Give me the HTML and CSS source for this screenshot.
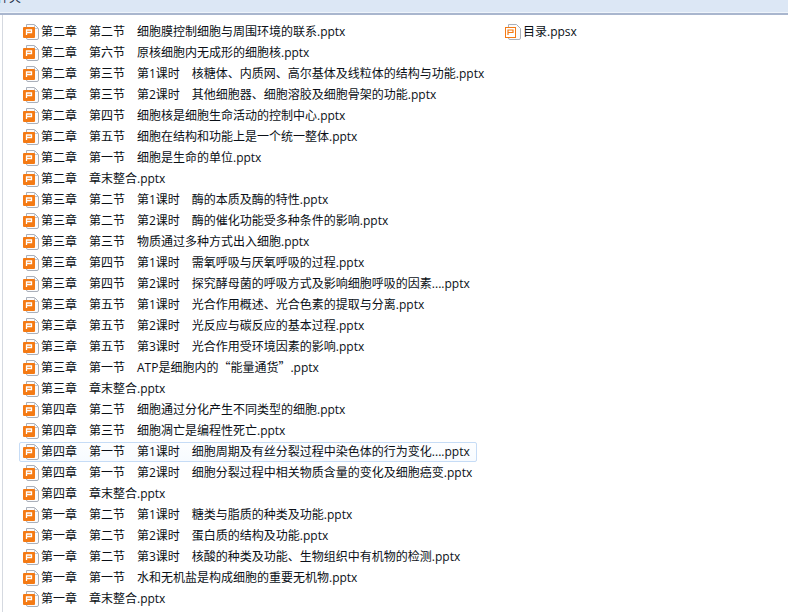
FILE: index.html
```html
<!DOCTYPE html>
<html lang="zh">
<head>
<meta charset="utf-8">
<title>文件夹</title>
<link rel="stylesheet" href="styles.css">
</head>
<body>
<header class="toolbar"><span class="toolbar-label">件夹</span></header>
<main class="pane">
<ul class="col col-main">
<li class="item"><svg class="ico"><use href="#p"/></svg><span>第二章　第二节　细胞膜控制细胞与周围环境的联系.pptx</span></li>
<li class="item"><svg class="ico"><use href="#p"/></svg><span>第二章　第六节　原核细胞内无成形的细胞核.pptx</span></li>
<li class="item"><svg class="ico"><use href="#p"/></svg><span>第二章　第三节　第1课时　核糖体、内质网、高尔基体及线粒体的结构与功能.pptx</span></li>
<li class="item"><svg class="ico"><use href="#p"/></svg><span>第二章　第三节　第2课时　其他细胞器、细胞溶胶及细胞骨架的功能.pptx</span></li>
<li class="item"><svg class="ico"><use href="#p"/></svg><span>第二章　第四节　细胞核是细胞生命活动的控制中心.pptx</span></li>
<li class="item"><svg class="ico"><use href="#p"/></svg><span>第二章　第五节　细胞在结构和功能上是一个统一整体.pptx</span></li>
<li class="item"><svg class="ico"><use href="#p"/></svg><span>第二章　第一节　细胞是生命的单位.pptx</span></li>
<li class="item"><svg class="ico"><use href="#p"/></svg><span>第二章　章末整合.pptx</span></li>
<li class="item"><svg class="ico"><use href="#p"/></svg><span>第三章　第二节　第1课时　酶的本质及酶的特性.pptx</span></li>
<li class="item"><svg class="ico"><use href="#p"/></svg><span>第三章　第二节　第2课时　酶的催化功能受多种条件的影响.pptx</span></li>
<li class="item"><svg class="ico"><use href="#p"/></svg><span>第三章　第三节　物质通过多种方式出入细胞.pptx</span></li>
<li class="item"><svg class="ico"><use href="#p"/></svg><span>第三章　第四节　第1课时　需氧呼吸与厌氧呼吸的过程.pptx</span></li>
<li class="item"><svg class="ico"><use href="#p"/></svg><span>第三章　第四节　第2课时　探究酵母菌的呼吸方式及影响细胞呼吸的因素....pptx</span></li>
<li class="item"><svg class="ico"><use href="#p"/></svg><span>第三章　第五节　第1课时　光合作用概述、光合色素的提取与分离.pptx</span></li>
<li class="item"><svg class="ico"><use href="#p"/></svg><span>第三章　第五节　第2课时　光反应与碳反应的基本过程.pptx</span></li>
<li class="item"><svg class="ico"><use href="#p"/></svg><span>第三章　第五节　第3课时　光合作用受环境因素的影响.pptx</span></li>
<li class="item"><svg class="ico"><use href="#p"/></svg><span>第三章　第一节　ATP是细胞内的<span class="cjk">“</span>能量通货<span class="cjk">”</span>.pptx</span></li>
<li class="item"><svg class="ico"><use href="#p"/></svg><span>第三章　章末整合.pptx</span></li>
<li class="item"><svg class="ico"><use href="#p"/></svg><span>第四章　第二节　细胞通过分化产生不同类型的细胞.pptx</span></li>
<li class="item"><svg class="ico"><use href="#p"/></svg><span>第四章　第三节　细胞凋亡是编程性死亡.pptx</span></li>
<li class="item item-focus"><svg class="ico"><use href="#p"/></svg><span>第四章　第一节　第1课时　细胞周期及有丝分裂过程中染色体的行为变化....pptx</span></li>
<li class="item"><svg class="ico"><use href="#p"/></svg><span>第四章　第一节　第2课时　细胞分裂过程中相关物质含量的变化及细胞癌变.pptx</span></li>
<li class="item"><svg class="ico"><use href="#p"/></svg><span>第四章　章末整合.pptx</span></li>
<li class="item"><svg class="ico"><use href="#p"/></svg><span>第一章　第二节　第1课时　糖类与脂质的种类及功能.pptx</span></li>
<li class="item"><svg class="ico"><use href="#p"/></svg><span>第一章　第二节　第2课时　蛋白质的结构及功能.pptx</span></li>
<li class="item"><svg class="ico"><use href="#p"/></svg><span>第一章　第二节　第3课时　核酸的种类及功能、生物组织中有机物的检测.pptx</span></li>
<li class="item"><svg class="ico"><use href="#p"/></svg><span>第一章　第一节　水和无机盐是构成细胞的重要无机物.pptx</span></li>
<li class="item"><svg class="ico"><use href="#p"/></svg><span>第一章　章末整合.pptx</span></li>
</ul>
<ul class="col col-side">
<li class="item"><svg class="ico"><use href="#s"/></svg><span>目录.ppsx</span></li>
</ul>
</main>
<svg class="defs" aria-hidden="true">
<symbol id="p" viewBox="0 0 16 16">
<path d="M3.500 .5H11.500L15.500 4.500V14Q15.500 15.500 14 15.500H5Q3.500 15.500 3.500 14V.5Z" fill="#fbfbfc" stroke="#aab0ba"/>
<path d="M11.500 .5V4.500H15.500" fill="none" stroke="#c4c8d0"/>
<rect x="0" y="3" width="12" height="11" rx="1" fill="#f47a14"/>
<path d="M3.500 11V6H8.500V8.500H3.500" fill="none" stroke="#fff" stroke-width="1.300"/>
</symbol>
<symbol id="s" viewBox="0 0 16 16">
<path d="M3.500 .5H11.500L15.500 4.500V14Q15.500 15.500 14 15.500H5Q3.500 15.500 3.500 14V.5Z" fill="#fbfbfc" stroke="#aab0ba"/>
<rect x=".5" y="3.500" width="10" height="10" fill="#fff" stroke="#f47a14"/>
<path d="M3 11V6H8V8.500H3" fill="none" stroke="#f47a14" stroke-width="1.200"/>
</symbol>
</svg>
</body>
</html>
```
FILE: styles.css
```css
* { box-sizing: border-box; }
html, body { margin: 0; padding: 0; }
body {
  width: 788px;
  height: 612px;
  overflow: hidden;
  background: #fff;
  color: #0a0f16;
  font: 12px/16px "Open Sans", "Noto Sans CJK SC", sans-serif;
}
.toolbar {
  height: 15px;
  background: #dce7f5;
  border-bottom: 2px solid #a9b6ce;
  box-shadow: inset 0 -1px 0 #eef4fb;
  overflow: hidden;
}
.toolbar-label {
  display: block;
  margin: -10px 0 0 -3px;
  color: #1e3048;
}
.pane {
  display: flex;
  height: 597px;
  padding: 7px 0 0 18px;
  margin-left: 2px;
  border-left: 1px solid #d5d9e0;
  overflow: hidden;
}
.col { list-style: none; margin: 0; padding: 0; }
.col-main { width: 458px; margin-left: -2px; flex: none; }
.col-side { margin-left: 24px; }
.item {
  display: flex;
  align-items: center;
  height: 20px;
  margin-bottom: 1px;
  padding-left: 3px;
  border: 1px solid transparent;
  border-radius: 2px;
  white-space: pre;
}
.item-focus {
  border-color: #c6dcf6;
  background: linear-gradient(#fdfeff, #f7fbff);
}
.ico { width: 16px; height: 16px; margin: -1px 2px 0 0; flex: none; }
.item span { margin-top: -1px; }
.item span.cjk { margin: 0; font-family: "Noto Sans CJK SC", sans-serif; }
.defs { display: none; }
```
